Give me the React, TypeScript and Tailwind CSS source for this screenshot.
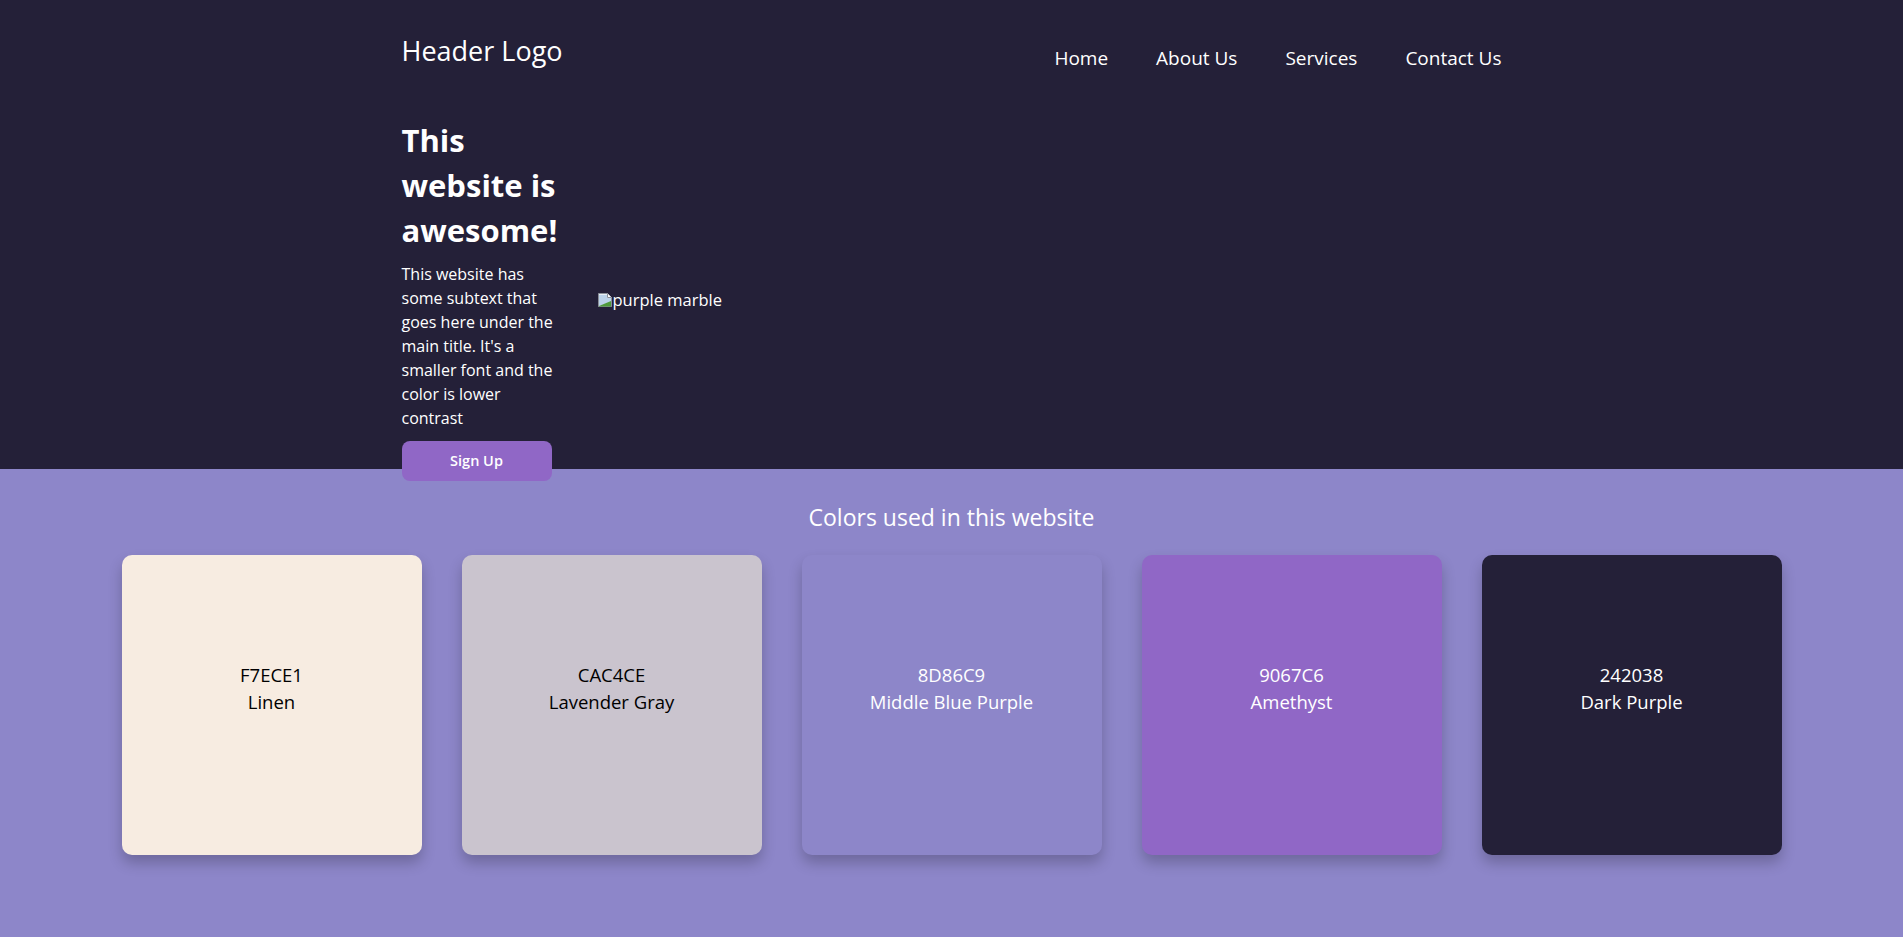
const colors = [
  { hex: "F7ECE1", name: "Linen", bg: "bg-[#F7ECE1]", text: "text-black" },
  { hex: "CAC4CE", name: "Lavender Gray", bg: "bg-[#CAC4CE]", text: "text-black" },
  { hex: "8D86C9", name: "Middle Blue Purple", bg: "bg-[#8D86C9]", text: "text-white" },
  { hex: "9067C6", name: "Amethyst", bg: "bg-[#9067C6]", text: "text-white" },
  { hex: "242038", name: "Dark Purple", bg: "bg-[#242038]", text: "text-white" },
];

const navLinks = ["Home", "About Us", "Services", "Contact Us"];

// the browser's broken-image glyph, drawn by hand
function BrokenImage() {
  return (
    <svg width="16" height="16" viewBox="0 0 16 16" aria-hidden>
      <path d="M1.5 1.5h9l4 4v9h-13z" fill="#e8eef5" stroke="#8a8f98" />
      <path d="M2 3h8v3l4 0v4L2 14z" fill="#bcd3ea" />
      <path d="M2 14l12-5v5.5H2z" fill="#4f9a3a" />
      <path d="M10.5 1.5v4h4" fill="#ffffff" stroke="#8a8f98" />
    </svg>
  );
}

export default function App() {
  return (
    <div className="min-h-screen font-['Open_Sans',sans-serif]">
      {/* ---------------- Hero ---------------- */}
      <section className="h-[50vh] bg-[#242038] text-white">
        <div className="mx-auto max-w-[1100px]">
          <header className="flex items-start justify-between pt-[31px]">
            <div className="text-[27px] leading-[40px]">Header Logo</div>
            <nav className="mt-[13px] flex gap-12 text-[19px] leading-[28px]">
              {navLinks.map((l) => (
                <a key={l} href="#" className="text-white">
                  {l}
                </a>
              ))}
            </nav>
          </header>

          <div className="mt-[46px] flex items-center gap-[40px]">
            <div className="w-[155px] shrink-0">
              <h1 className="text-[31px] font-bold leading-[45px]">
                This website is awesome!
              </h1>
              <p className="mt-[9px] text-[16px] leading-[24px] text-white">
                This website has some subtext that goes here under the main
                title. It's a smaller font and the color is lower contrast
              </p>
              <button className="relative z-10 mt-[11px] h-10 w-[150px] rounded-lg bg-[#9067C6] text-[14.5px] font-semibold text-white">
                Sign Up
              </button>
            </div>
            <div className="flex items-center text-[16.5px] leading-[24px]">
              <BrokenImage />
              <span>purple marble</span>
            </div>
          </div>
        </div>
      </section>

      {/* ---------------- Palette ---------------- */}
      <section className="h-[50vh] bg-[#8D86C9] pt-8">
        <h2 className="text-center text-[23px] font-medium leading-[33px] text-white">
          Colors used in this website
        </h2>
        <div className="mt-[21px] flex justify-center gap-10">
          {colors.map((c) => (
            <div
              key={c.hex}
              className={`flex h-[300px] w-[300px] items-center justify-center rounded-[10px] shadow-[0_8px_14px_rgba(0,0,0,0.22)] ${c.bg} ${c.text}`}
            >
              <div className="mb-[34px] text-center text-[18.5px] leading-[27px]">
                <p>{c.hex}</p>
                <p>{c.name}</p>
              </div>
            </div>
          ))}
        </div>
      </section>
    </div>
  );
}
